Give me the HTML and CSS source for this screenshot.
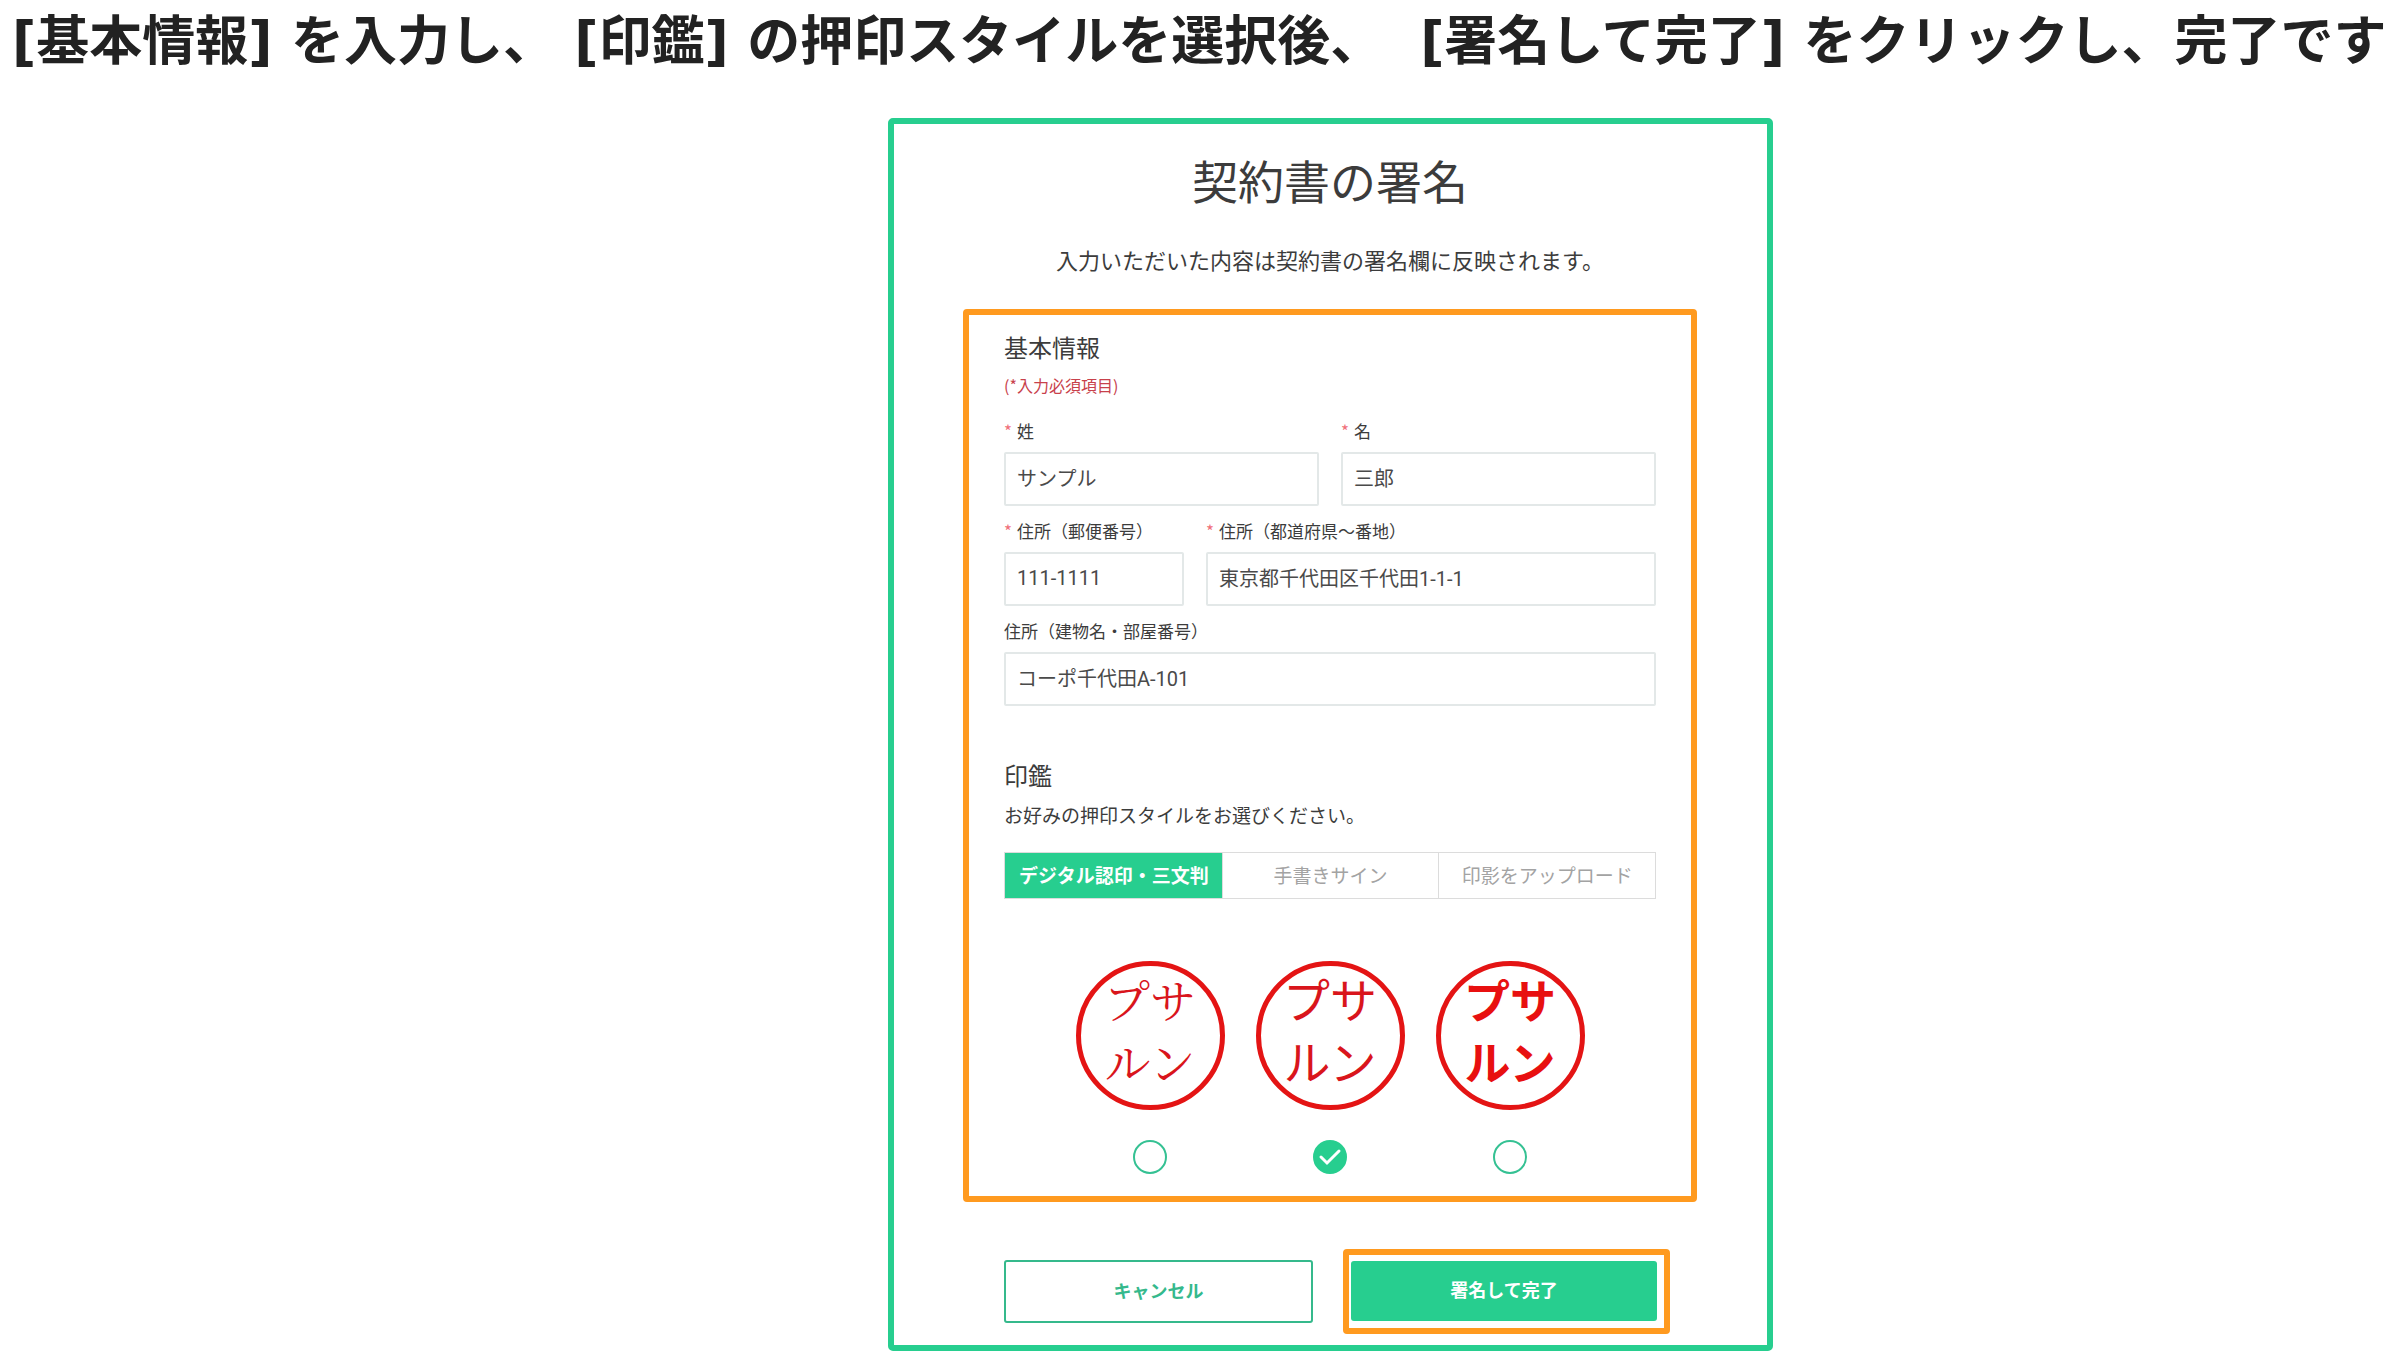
FILE: index.html
```html
<!DOCTYPE html>
<html lang="ja">
<head>
  <meta charset="UTF-8">
  <meta name="viewport" content="width=device-width, initial-scale=1">
  <title>契約書の署名</title>
  <link rel="stylesheet" href="styles.css">
</head>
<body>

  <h1 class="guide">[基本情報] を入力し、 [印鑑] の押印スタイルを選択後、&nbsp; [署名して完了] をクリックし、完了です</h1>

  <main class="panel">
    <h2 class="panel-title">契約書の署名</h2>
    <p class="panel-lead">入力いただいた内容は契約書の署名欄に反映されます。</p>

    <form id="signForm">
      <div class="form-box">
        <h3 class="section-title">基本情報</h3>
        <p class="required-note">(*入力必須項目)</p>

        <div class="form-row">
          <div class="form-group">
            <label for="lastName"><span class="req">*</span>姓</label>
            <input type="text" id="lastName" name="lastName" value="サンプル" required>
          </div>
          <div class="form-group">
            <label for="firstName"><span class="req">*</span>名</label>
            <input type="text" id="firstName" name="firstName" value="三郎" required>
          </div>
        </div>

        <div class="form-row address-row">
          <div class="form-group">
            <label for="zip"><span class="req">*</span>住所（郵便番号）</label>
            <input type="text" id="zip" name="zip" value="111-1111" required>
          </div>
          <div class="form-group">
            <label for="address"><span class="req">*</span>住所（都道府県～番地）</label>
            <input type="text" id="address" name="address" value="東京都千代田区千代田1-1-1" required>
          </div>
        </div>

        <div class="form-group">
          <label for="building">住所（建物名・部屋番号）</label>
          <input type="text" id="building" name="building" value="コーポ千代田A-101">
        </div>

        <h3 class="section-title seal-title">印鑑</h3>
        <p class="seal-note">お好みの押印スタイルをお選びください。</p>

        <div class="tabs">
          <button type="button" class="tab active">デジタル認印・三文判</button>
          <button type="button" class="tab">手書きサイン</button>
          <button type="button" class="tab">印影をアップロード</button>
        </div>

        <div class="stamps">
          <label class="stamp-option">
            <span class="stamp stamp-mincho">プサ<br>ルン</span>
            <input type="radio" name="stamp" value="mincho">
            <svg class="mark" viewBox="0 0 34 34" aria-hidden="true"><circle cx="17" cy="17" r="16"/><path d="M8 17l6 6 12-12"/></svg>
          </label>
          <label class="stamp-option">
            <span class="stamp stamp-gothic">プサ<br>ルン</span>
            <input type="radio" name="stamp" value="gothic" checked>
            <svg class="mark" viewBox="0 0 34 34" aria-hidden="true"><circle cx="17" cy="17" r="16"/><path d="M8 17l6 6 12-12"/></svg>
          </label>
          <label class="stamp-option">
            <span class="stamp stamp-bold">プサ<br>ルン</span>
            <input type="radio" name="stamp" value="bold">
            <svg class="mark" viewBox="0 0 34 34" aria-hidden="true"><circle cx="17" cy="17" r="16"/><path d="M8 17l6 6 12-12"/></svg>
          </label>
        </div>
      </div>

      <div class="actions">
        <button type="button" class="btn btn-cancel">キャンセル</button>
        <div class="submit-box">
          <button type="submit" class="btn btn-submit">署名して完了</button>
        </div>
      </div>
    </form>
  </main>

</body>
</html>
```
FILE: styles.css
```css
* { box-sizing: border-box; }
body {
  margin: 0; background: #fff; color: #3c3c3c;
  font-family: "Noto Sans CJK JP", sans-serif;
}
h1, h2, h3, p { margin: 0; font-weight: 400; }
button, input { font-family: inherit; }

.guide {
  padding: 2px 12px; font-family: "DejaVu Sans", "Noto Sans CJK JP", sans-serif;
  font-size: 53px; line-height: 80px; font-weight: 700;
  color: #222; white-space: nowrap;
}

.panel {
  width: 37%; max-width: 885px; margin: 34px 0 16px 37%; padding: 25px 70px 11px 69px;
  border: 6px solid #27ce8f; border-radius: 5px;
}
.panel-title { font-size: 46px; line-height: 60px; text-align: center; }
.panel-lead { margin: 34px 0; font-size: 22px; line-height: 32px; text-align: center; }

.form-box {
  padding: 16px 35px 22px; border: 6px solid #ff9a1f; border-radius: 4px;
}
.section-title { font-size: 24px; line-height: 32px; }
.required-note { margin: 10px 0 9px; font-size: 16px; line-height: 24px; color: #c8414b; }

.form-row { display: grid; grid-template-columns: 1fr 1fr; gap: 22px; }
.address-row { grid-template-columns: 2fr 5fr; }
.form-group { padding-top: 13px; }
.form-group label { display: block; margin-bottom: 9px; font-size: 17px; line-height: 24px; }
.req { margin-right: 5px; color: #f0707a; }
.form-group input {
  display: block; width: 100%; height: 54px; padding: 0 11px 3px;
  border: 2px solid #e3e8e8; border-radius: 2px; background: #fff;
  font-family: Roboto, "Noto Sans CJK JP", sans-serif; font-size: 20px; color: #4a4a4a;
}

.seal-title { margin-top: 53px; }
.seal-note { margin: 10px 0 23px; font-size: 19px; line-height: 28px; }
.tabs { display: grid; grid-template-columns: repeat(3, 1fr); border: 1px solid #dcdcdc; }
.tab {
  height: 45px; padding: 0 0 3px; border: 0; border-left: 1px solid #dcdcdc;
  background: #fff; color: #a3a3a3; font-size: 19px; white-space: nowrap;
}
.tab.active { border-color: #27ce8f; background: #27ce8f; color: #fff; font-weight: 700; }

.stamps { display: flex; justify-content: center; gap: 31px; margin-top: 62px; }
.stamp-option { display: flex; flex-direction: column; align-items: center; }
.stamp {
  width: 149px; height: 149px; padding-top: 1px; margin-bottom: 30px;
  border: 5px solid #e41414; border-radius: 50%;
  color: #d9151c; font-size: 46px; line-height: 62px; text-align: center;
}
.stamp-mincho { font-family: "Noto Serif CJK JP", "Noto Sans CJK JP", serif; }
.stamp-gothic { font-size: 47px; }
.stamp-bold { font-weight: 700; color: #e81010; }
.stamp-option input { position: absolute; opacity: 0; }
.mark { width: 34px; height: 34px; fill: none; }
.mark circle { stroke: #35c193; stroke-width: 2; }
.mark path { stroke: none; }
.stamp-option input:checked + .mark circle { fill: #27ce8f; stroke: #27ce8f; }
.stamp-option input:checked + .mark path { stroke: #fff; stroke-width: 3; stroke-linecap: round; }

.actions { display: flex; align-items: center; gap: 30px; margin-top: 47px; padding: 0 27px 0 41px; }
.btn { padding: 0 0 4px; border-radius: 3px; font-size: 18px; font-weight: 700; cursor: pointer; }
.btn-cancel { flex: 1 1 309px; height: 63px; border: 2px solid #35b98c; background: #fff; color: #35b98c; }
.submit-box { flex: 1 1 327px; padding: 6px 7px 7px 2px; border: 6px solid #ff9a1f; border-radius: 4px; }
.btn-submit { display: block; width: 100%; height: 60px; border: 0; background: #27ce8f; color: #fff; }
```
